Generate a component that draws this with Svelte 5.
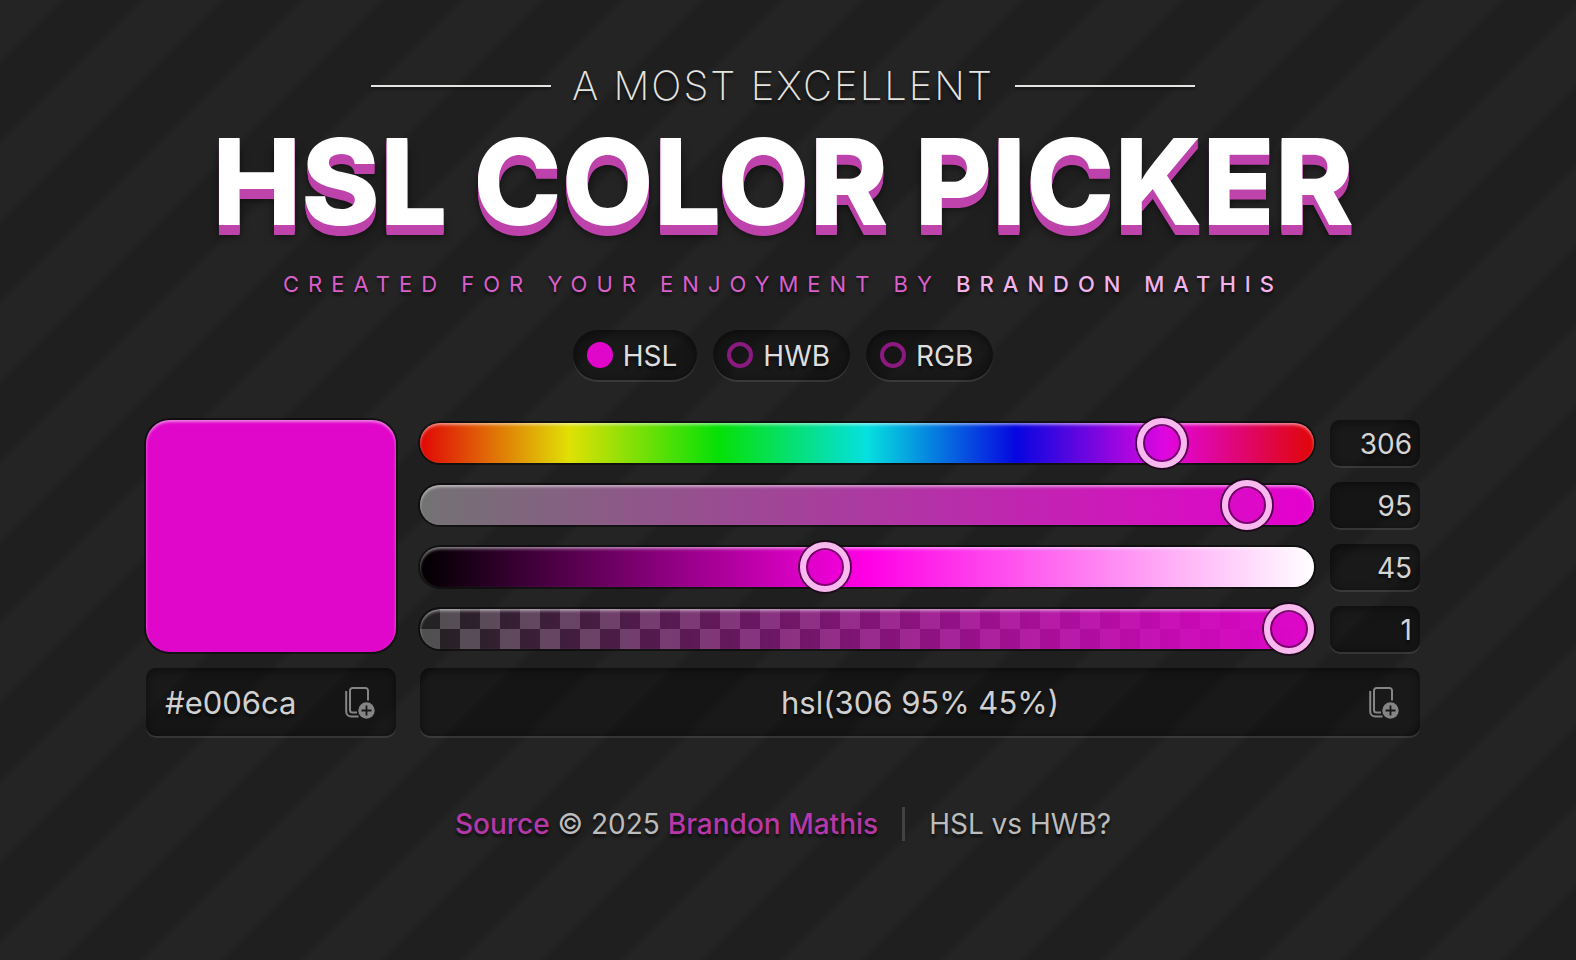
<script>
  let h = $state(306);
  let s = $state(95);
  let l = $state(45);
  let a = $state(1);
  let mode = $state('HSL');

  const modes = ['HSL', 'HWB', 'RGB'];

  function toHex(h, s, l) {
    const sat = s / 100;
    const lum = l / 100;
    const k = (n) => (n + h / 30) % 12;
    const f = (n) => lum - sat * Math.min(lum, 1 - lum) * Math.max(-1, Math.min(k(n) - 3, 9 - k(n), 1));
    return '#' + [f(0), f(8), f(4)].map((v) => Math.round(v * 255).toString(16).padStart(2, '0')).join('');
  }

  let hex = $derived(toHex(h, s, l));
  let alpha = $derived(a < 1 ? ` / ${a}` : '');
  let css = $derived(`hsl(${h} ${s}% ${l}%${alpha})`);

  const copy = (text) => navigator.clipboard?.writeText(text);
</script>

{#snippet copyIcon()}
  <svg viewBox="0 0 30 32" width="30" height="32" aria-hidden="true">
    <g fill="none" stroke="currentColor" stroke-width="2">
      <path d="M12 25.500H7.500a2.500 2.500 0 0 1-2.500-2.500V3.500a2.500 2.500 0 0 1 2.500-2.500h13a2.500 2.500 0 0 1 2.500 2.500V13.500" />
      <path d="M1.200 4v20.500a5 5 0 0 0 5 5H13.500" />
    </g>
    <circle cx="21.500" cy="23.500" r="8.200" fill="currentColor" />
    <path d="M21.500 18.500v10M16.500 23.500h10" stroke="#181818" stroke-width="1.800" />
  </svg>
{/snippet}

<div class="page">
  <header>
    <p class="over">A most excellent</p>
    <h1>HSL Color Picker</h1>
    <p class="byline">Created for your enjoyment by <a href="#author">Brandon Mathis</a></p>
  </header>

  <main>
    <div class="modes" role="radiogroup" aria-label="Color mode">
      {#each modes as m}
        <label class="mode">
          <input type="radio" name="mode" value={m} bind:group={mode} />
          <span>{m}</span>
        </label>
      {/each}
    </div>

    <div class="picker" style:--h={h} style:--s="{s}%" style:--l="{l}%" style:--a={a}>
      <div class="swatch"></div>
      <div class="controls">
        <div class="row">
          <input class="range hue" type="range" min="0" max="360" aria-label="Hue" bind:value={h} />
          <input class="num" type="number" min="0" max="360" aria-label="Hue value" bind:value={h} />
        </div>
        <div class="row">
          <input class="range sat" type="range" min="0" max="100" aria-label="Saturation" bind:value={s} />
          <input class="num" type="number" min="0" max="100" aria-label="Saturation value" bind:value={s} />
        </div>
        <div class="row">
          <input class="range lum" type="range" min="0" max="100" aria-label="Lightness" bind:value={l} />
          <input class="num" type="number" min="0" max="100" aria-label="Lightness value" bind:value={l} />
        </div>
        <div class="row">
          <input class="range alpha" type="range" min="0" max="1" step="0.01" aria-label="Alpha" bind:value={a} />
          <input class="num" type="number" min="0" max="1" step="0.01" aria-label="Alpha value" bind:value={a} />
        </div>
      </div>
      <div class="code">
        <input class="hex" type="text" aria-label="Hex color" value={hex} readonly />
        <button type="button" aria-label="Copy hex color" onclick={() => copy(hex)}>{@render copyIcon()}</button>
      </div>
      <div class="code">
        <input class="css" type="text" aria-label="CSS color" value={css} readonly />
        <button type="button" aria-label="Copy CSS color" onclick={() => copy(css)}>{@render copyIcon()}</button>
      </div>
    </div>
  </main>

  <footer>
    <p><a href="#source">Source</a> © 2025 <a href="#author">Brandon Mathis</a></p>
    <a class="versus" href="#versus">HSL vs HWB?</a>
  </footer>
</div>

<style>
  :global(body) {
    margin: 0;
    background-color: #212121;
    background-image: linear-gradient(135deg, #242424 18%, #1f1f1f 21%, #1f1f1f 43%, #242424 46%, #242424 68%, #1f1f1f 71%, #1f1f1f 93%, #242424 96%);
    background-size: 160px 160px;
  }

  .page {
    box-sizing: border-box;
    max-width: 1332px;
    margin: 0 auto;
    padding: 62px 34px 40px 24px;
    font-family: Inter, sans-serif;
    font-size: 28px;
    line-height: 34px;
    color: #dedede;
    text-shadow: 0 3px 3px rgba(0, 0, 0, 0.6);
  }

  header {
    text-align: center;
    text-transform: uppercase;
  }

  p,
  h1 {
    margin: 0;
  }

  .over {
    display: flex;
    align-items: center;
    justify-content: center;
    gap: 21px;
    font-size: 40px;
    line-height: 48px;
    font-weight: 200;
    letter-spacing: 2px;
    color: #e4e4e0;
  }

  .over::before,
  .over::after {
    content: '';
    width: 180px;
    height: 2px;
    background: #e4e4e0;
    box-shadow: 0 2px 3px rgba(0, 0, 0, 0.5);
  }

  h1 {
    margin-top: 12px;
    font-size: 119px;
    line-height: 120px;
    font-weight: 800;
    color: #fff;
    text-shadow:
      0 1px 0 #be43ab, 0 2px 0 #be43ab, 0 3px 0 #be43ab, 0 4px 0 #be43ab, 0 5px 0 #be43ab,
      0 6px 0 #be43ab, 0 7px 0 #be43ab, 0 8px 0 #be43ab, 0 9px 0 #be43ab, 0 10px 0 #be43ab,
      0 11px 8px rgba(0, 0, 0, 0.6);
  }

  .byline {
    margin-top: 26px;
    font-size: 22px;
    line-height: 32px;
    letter-spacing: 9px;
    color: #d95fcb;
  }

  .byline a {
    color: #f2b2eb;
    font-weight: 500;
    text-decoration: none;
  }

  .modes {
    display: flex;
    justify-content: center;
    gap: 16px;
    margin-top: 30px;
  }

  .mode,
  .num,
  .code {
    box-sizing: border-box;
    background: rgba(0, 0, 0, 0.3);
    box-shadow:
      inset 0 2px 8px rgba(0, 0, 0, 0.5),
      0 2px 0 rgba(255, 255, 255, 0.1);
  }

  .mode {
    display: flex;
    align-items: center;
    gap: 10px;
    height: 50px;
    padding: 0 20px 0 14px;
    border-radius: 25px;
  }

  .mode span {
    padding-top: 2px;
  }

  .mode input {
    appearance: none;
    box-sizing: border-box;
    width: 26px;
    height: 26px;
    margin: 0;
    border: 4px solid #8a1a7f;
    border-radius: 50%;
  }

  .mode input:checked {
    border-color: #e006ca;
    background: #e006ca;
  }

  .picker {
    display: grid;
    grid-template-columns: 250px 1fr;
    gap: 16px 24px;
    margin-top: 40px;
  }

  .swatch {
    border-radius: 24px;
    background: hsl(var(--h) var(--s) var(--l) / var(--a));
    box-shadow:
      0 0 0 2px rgba(0, 0, 0, 0.5),
      inset 0 2px 3px rgba(255, 255, 255, 0.5);
  }

  .controls {
    display: grid;
    gap: 16px;
  }

  .row {
    display: grid;
    grid-template-columns: 1fr 90px;
    align-items: center;
    gap: 16px;
    height: 46px;
  }

  .range {
    appearance: none;
    width: 100%;
    height: 40px;
    margin: 0;
    border-radius: 20px;
    box-shadow:
      0 0 0 2px rgba(0, 0, 0, 0.5),
      inset 0 2px 3px rgba(255, 255, 255, 0.5);
  }

  .range::-webkit-slider-thumb {
    appearance: none;
    box-sizing: border-box;
    width: 50px;
    height: 50px;
    border: 6px solid #f8b9ee;
    border-radius: 50%;
    background: transparent;
    box-shadow:
      0 0 0 2px rgba(30, 0, 27, 0.7),
      inset 0 0 0 2px rgba(60, 0, 54, 0.65);
  }

  .hue {
    background: linear-gradient(90deg, #e00606, #e0e006, #06e006, #06e0e0, #0606e0, #e006e0, #e00606);
  }

  .sat {
    background: linear-gradient(90deg, hsl(var(--h) 0% var(--l)), hsl(var(--h) 100% var(--l)));
  }

  .lum {
    background: linear-gradient(90deg, #000, hsl(var(--h) 100% 50%), #fff);
  }

  .alpha {
    background:
      linear-gradient(90deg, transparent, hsl(var(--h) var(--s) var(--l))),
      conic-gradient(#505050 25%, #222 0 50%, #505050 0 75%, #222 0) 0 0 / 40px 40px;
  }

  .num {
    appearance: textfield;
    width: 90px;
    height: 46px;
    padding: 2px 8px 0;
    border: 0;
    border-radius: 10px;
    font: inherit;
    color: #d4d4d4;
    text-align: right;
    text-shadow: inherit;
  }

  .num::-webkit-inner-spin-button {
    appearance: none;
    margin: 0;
  }

  .code {
    display: grid;
    grid-template-columns: 1fr auto;
    height: 68px;
    border-radius: 10px;
  }

  .code input {
    min-width: 0;
    padding: 2px 0 0 19px;
    border: 0;
    background: none;
    font: inherit;
    font-size: 31px;
    color: #d0d0d0;
    text-shadow: inherit;
  }

  .code .css {
    padding-left: 72px;
    text-align: center;
  }

  .code button {
    display: flex;
    align-items: center;
    padding: 2px 21px 0;
    border: 0;
    background: none;
    color: #858585;
  }

  footer {
    display: flex;
    justify-content: center;
    align-items: center;
    gap: 24px;
    margin-top: 71px;
    color: #bcbcbc;
  }

  footer p a {
    color: #b637a7;
    font-weight: 500;
    text-decoration: none;
  }

  .versus {
    padding-left: 24px;
    border-left: 3px solid #424242;
    color: inherit;
    text-decoration: none;
  }
</style>
